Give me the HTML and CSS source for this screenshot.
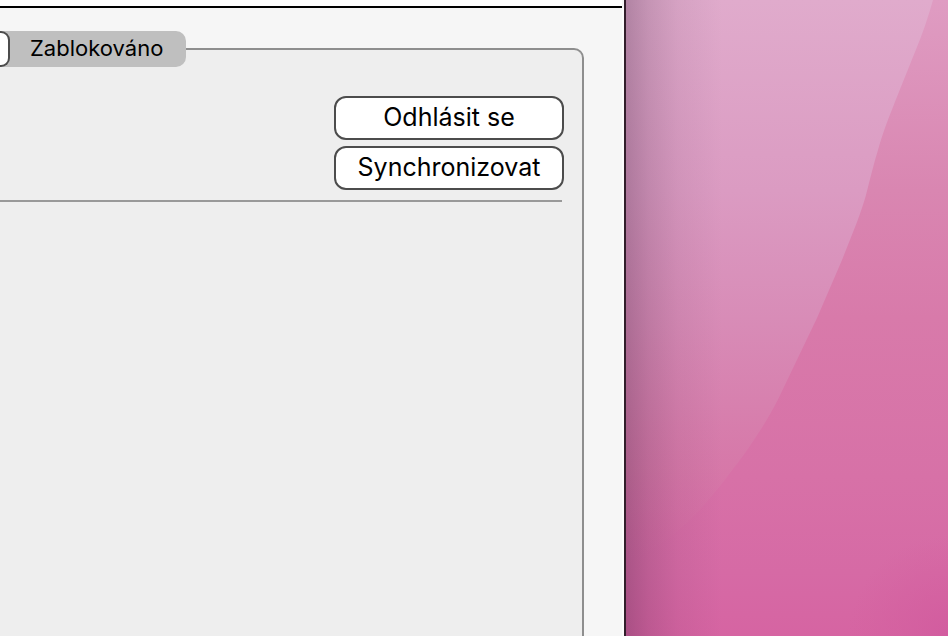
FILE: index.html
```
<!DOCTYPE html>
<html lang="cs">
<head>
    <meta charset="UTF-8" />
    <meta name="viewport" content="width=device-width, initial-scale=1.0" />
    <title>Účet</title>
    <link rel="stylesheet" href="styles.css">
</head>
<body>
    <div class="desktop">
        <main class="window">
            <div class="toolbar"></div>

            <div class="content">
                <div class="tabs" role="tablist">
                    <button class="tab" type="button" role="tab" aria-selected="true" aria-label="Účet"></button>
                    <button class="tab blocked" type="button" role="tab" aria-selected="false">Zablokováno</button>
                </div>

                <section class="panel">
                    <div class="account">
                        <button class="action" type="button">Odhlásit se</button>
                        <button class="action" type="button">Synchronizovat</button>
                    </div>
                </section>
            </div>
        </main>

        <div class="wallpaper">
            <svg viewBox="0 0 322 636" preserveAspectRatio="none" aria-hidden="true">
                <defs>
                    <linearGradient id="base" x1="0" y1="0" x2="0" y2="1">
                        <stop offset="0" stop-color="#df9cc2" />
                        <stop offset="0.3" stop-color="#d986b1" />
                        <stop offset="0.5" stop-color="#d87aaa" />
                        <stop offset="0.75" stop-color="#d771a7" />
                        <stop offset="0.9" stop-color="#d66aa5" />
                        <stop offset="1" stop-color="#d664a2" />
                    </linearGradient>
                    <linearGradient id="sheet" gradientUnits="userSpaceOnUse" x1="0" y1="0" x2="0" y2="636">
                        <stop offset="0" stop-color="#e0abcc" />
                        <stop offset="0.3" stop-color="#db9bc2" />
                        <stop offset="0.5" stop-color="#d88cb7" />
                        <stop offset="0.64" stop-color="#d780ae" />
                        <stop offset="0.74" stop-color="#d67aa9" stop-opacity="0.75" />
                        <stop offset="0.88" stop-color="#d66fa5" stop-opacity="0" />
                    </linearGradient>
                    <linearGradient id="shade" x1="0" y1="0" x2="1" y2="0">
                        <stop offset="0" stop-color="#2c1430" stop-opacity="0.26" />
                        <stop offset="0.07" stop-color="#2c1430" stop-opacity="0.15" />
                        <stop offset="0.16" stop-color="#2c1430" stop-opacity="0.06" />
                        <stop offset="0.3" stop-color="#2c1430" stop-opacity="0" />
                    </linearGradient>
                    <radialGradient id="corner" gradientUnits="userSpaceOnUse" cx="322" cy="636" r="100">
                        <stop offset="0" stop-color="#d25c9f" />
                        <stop offset="1" stop-color="#d4609f" stop-opacity="0" />
                    </radialGradient>
                </defs>
                <rect width="322" height="636" fill="url(#base)" />
                <rect width="322" height="636" fill="url(#corner)" />
                <path d="M0 0H307C302 18 296 35 289 52C281 72 274 89 267 107C260 124 256 136 252 150C248 163 245 175 242 187C239 200 235 211 231 222L216 260L191 318L157 389C151 402 145 413 137 426C128 440 119 454 107 469C96 484 84 499 71 513C47 538 25 552 0 565Z" fill="url(#sheet)" />
                <rect width="322" height="636" fill="url(#shade)" />
            </svg>
        </div>
    </div>
</body>
</html>
```
FILE: styles.css
```
* {
    box-sizing: border-box;
}

body {
    margin: 0;
    font-family: "Inter", "Liberation Sans", sans-serif;
    color: #000;
}

.desktop {
    display: grid;
    grid-template-columns: minmax(0, 1fr) 322px;
    min-height: 100vh;
    overflow: hidden;
}

.window {
    display: flex;
    flex-direction: column;
    background: #f6f6f6;
    border-right: 2px solid #321e2b;
}

.toolbar {
    height: 8px;
    margin-right: 2px;
    background: #fff;
    border-bottom: 2px solid #000;
}

.content {
    flex: 1;
    display: flex;
    flex-direction: column;
    padding-top: 23px;
    padding-right: 38px;
    border-right: 2px solid #fcfcfc;
}

.tabs {
    display: flex;
    align-self: flex-start;
    position: relative;
    height: 36px;
    background: #bfbfbf;
    border-radius: 0 10px 10px 0;
}

.tab {
    width: 10px;
    padding: 0;
    background: #fff;
    border: 2px solid #4c4c4c;
    border-left: none;
    border-radius: 0 9px 9px 0;
    font-family: inherit;
    font-size: 22px;
    line-height: 30px;
    color: inherit;
}

.tab.blocked {
    width: auto;
    padding: 0 21px 2px 20px;
    background: none;
    border-color: transparent;
}

.panel {
    flex: 1;
    margin-top: -19px;
    padding: 46px 18px 0 0;
    background: #eee;
    border-top: 2px solid #8e8e8e;
    border-right: 2px solid #8e8e8e;
    border-top-right-radius: 10px;
}

.account {
    display: flex;
    flex-direction: column;
    align-items: flex-end;
    gap: 6px;
    margin-right: 2px;
    padding-bottom: 10px;
    border-bottom: 2px solid #999;
}

.action {
    width: 230px;
    height: 44px;
    margin-right: -2px;
    padding: 0 0 2px;
    background: #fff;
    border: 2px solid #4c4c4c;
    border-radius: 12px;
    font-family: inherit;
    font-size: 25px;
    line-height: 38px;
    color: inherit;
}

.wallpaper {
    position: relative;
    background: #d978a9;
}

.wallpaper svg {
    position: absolute;
    inset: 0;
    width: 100%;
    height: 100%;
}
```
